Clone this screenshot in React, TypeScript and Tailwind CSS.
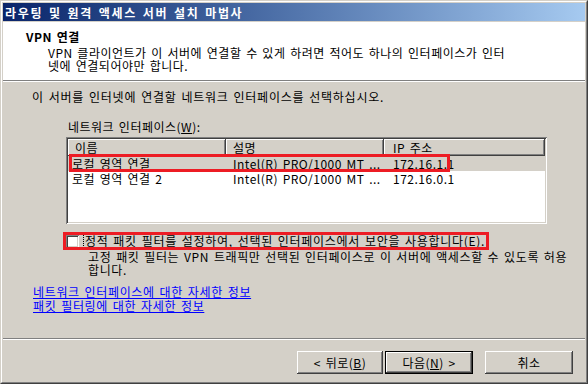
import React from 'react';

const raised =
  'shadow-[inset_-1px_-1px_#404040,inset_1px_1px_#ffffff,inset_-2px_-2px_#808080,inset_2px_2px_#d4d0c8]';
const sunken =
  'shadow-[inset_1px_1px_#808080,inset_-1px_-1px_#ffffff,inset_2px_2px_#404040,inset_-2px_-2px_#d4d0c8]';

const Button: React.FC<{ children: React.ReactNode; width: string; isDefault?: boolean }> = ({
  children,
  width,
  isDefault,
}) => (
  <div
    className={
      isDefault
        ? `${width} h-[23px] border border-black flex`
        : `${width} h-[23px] flex`
    }
  >
    <div className={`flex-1 flex items-center justify-center bg-[#d4d0c8] ${raised}`}>{children}</div>
  </div>
);

const App: React.FC = () => {
  return (
    <div className="w-[588px] h-[384px] bg-[#d4d0c8] overflow-hidden font-['Noto_Sans_CJK_KR',sans-serif] text-[12px] leading-[13px] text-black tracking-[0.5px] [word-spacing:1.5px]">
      <div className="w-full h-full border border-[#d4d0c8] border-r-[#404040] border-b-[#404040]">
        <div className="w-full h-full border border-white border-r-[#808080] border-b-[#808080] p-px flex flex-col">
          {/* title bar */}
          <div className="h-[18px] mb-px flex items-center pl-[2px] bg-linear-to-r from-[#0a246a] to-[#a6caf0] text-white font-bold tracking-[1.65px]">
            라우팅 및 원격 액세스 서버 설치 마법사
          </div>

          {/* header */}
          <div className="h-[58px] bg-white pl-[23px] pt-[8px]">
            <div className="font-bold">VPN 연결</div>
            <div className="pl-[22px] mt-[3px]">
              VPN 클라이언트가 이 서버에 연결할 수 있게 하려면 적어도 하나의 인터페이스가 인터
              <br />
              넷에 연결되어야만 합니다.
            </div>
          </div>
          <div className="h-[2px] border-t border-[#808080] border-b border-b-white" />

          {/* body */}
          <div className="flex-1 pl-[29px] pt-[8px]">
            <div className="tracking-[0.75px]">이 서버를 인터넷에 연결할 네트워크 인터페이스를 선택하십시오.</div>
            <div className="ml-[36px] mt-[17px]">
              네트워크 인터페이스(<span className="underline">W</span>):
            </div>

            <div className={`relative ml-[34px] mt-[4px] w-[481px] h-[87px] bg-white p-[2px] ${sunken}`}>
              <div className="flex h-[17px]">
                <div className={`w-[158px] flex items-center pl-[7px] bg-[#d4d0c8] ${raised}`}>이름</div>
                <div className={`w-[158px] flex items-center pl-[7px] bg-[#d4d0c8] ${raised}`}>설명</div>
                <div className={`w-[161px] flex items-center pl-[9px] bg-[#d4d0c8] ${raised}`}>IP 주소</div>
              </div>
              <div className="flex h-[15px] items-center bg-[#d4d0c8]">
                <div className="w-[158px] pl-[4px]">로컬 영역 연결</div>
                <div className="w-[158px] pl-[7px]">Intel(R) PRO/1000 MT ...</div>
                <div className="w-[161px] pl-[9px]">172.16.1.1</div>
              </div>
              <div className="flex h-[15px] items-center">
                <div className="w-[158px] pl-[4px]">로컬 영역 연결 2</div>
                <div className="w-[158px] pl-[7px]">Intel(R) PRO/1000 MT ...</div>
                <div className="w-[161px] pl-[9px]">172.16.0.1</div>
              </div>
              <div className="absolute left-[3px] top-[17px] w-[381px] h-[18px] border-[3px] border-[#ed1c24]" />
            </div>

            <div className="relative flex items-center h-[14px] ml-[34px] mt-[10px]">
              <div className={`w-[13px] h-[13px] bg-white ${sunken}`} />
              <span className="ml-[4px] border border-dotted border-black px-px leading-[12px] tracking-[0.7px]">
                정적 패킷 필터를 설정하여, 선택된 인터페이스에서 보안을 사용합니다(<span className="underline">E</span>).
              </span>
              <div className="absolute -left-[3px] -top-[2px] w-[426px] h-[18px] border-[3px] border-[#ed1c24]" />
            </div>

            <div className="ml-[56px] mt-[2px] tracking-[0.62px]">
              고정 패킷 필터는 VPN 트래픽만 선택된 인터페이스로 이 서버에 액세스할 수 있도록 허용
              <br />
              합니다.
            </div>

            <div className="ml-px mt-[9px] leading-[14px] text-[#0000ff] tracking-[0.65px]">
              <div>
                <span className="underline">네트워크 인터페이스에 대한 자세한 정보</span>
              </div>
              <div>
                <span className="underline">패킷 필터링에 대한 자세한 정보</span>
              </div>
            </div>
          </div>

          {/* footer */}
          <div className="h-[2px] border-t border-[#808080] border-b border-b-white" />
          <div className="flex justify-end pt-[11px] pb-[7px] pr-[12px]">
            <Button width="w-[86px]">
              &lt; 뒤로(<span className="underline">B</span>)
            </Button>
            <div className="w-[2px]" />
            <Button width="w-[88px]" isDefault>
              다음(<span className="underline">N</span>) &gt;
            </Button>
            <div className="w-[12px]" />
            <Button width="w-[88px]">취소</Button>
          </div>
        </div>
      </div>
    </div>
  );
};

export default App;
